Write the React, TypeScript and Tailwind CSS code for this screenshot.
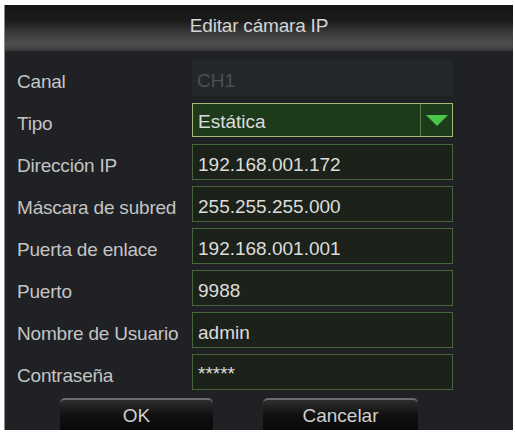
import { JSX } from "react";

type Field = { label: string; value: string };

const fields: Field[] = [
  { label: "Dirección IP", value: "192.168.001.172" },
  { label: "Máscara de subred", value: "255.255.255.000" },
  { label: "Puerta de enlace", value: "192.168.001.001" },
  { label: "Puerto", value: "9988" },
  { label: "Nombre de Usuario", value: "admin" },
  { label: "Contraseña", value: "*****" },
];

function Label({ children }: { children: string }): JSX.Element {
  return (
    <div className="w-[187px] shrink-0 pl-[12px] pt-[6px] whitespace-nowrap tracking-[-0.2px] text-[#c4c4c4]">
      {children}
    </div>
  );
}

export default function App(): JSX.Element {
  return (
    <div
      className="w-[515px] h-[434px] bg-white pt-[5px] pl-[4px]"
      style={{ fontFamily: '"Liberation Sans", Arial, sans-serif' }}
    >
      <div className="w-[509px] h-[425px] flex flex-col overflow-hidden bg-[#1f2124] border-l border-[#8a8a8a] text-[19px] leading-none">
        {/* title bar */}
        <div className="h-[46px] shrink-0 flex items-center justify-center pb-[6px] bg-[linear-gradient(to_bottom,#141414_0%,#1b1b1b_35%,#3c3c3c_62%,#4e4e4e_85%,#3a3a3a_100%)] text-[#d4d4d4] text-[19px] tracking-[-0.2px]">
          Editar cámara IP
        </div>

        <div className="flex flex-col gap-[6px] pt-[9px]">
          {/* Canal */}
          <div className="h-[36px] flex items-center">
            <Label>Canal</Label>
            <div className="w-[261px] h-[36px] flex items-center pl-[5px] pt-[4px] bg-[#24272a] text-[#4c4f52]">
              CH1
            </div>
          </div>

          {/* Tipo */}
          <div className="h-[36px] flex items-center">
            <Label>Tipo</Label>
            <div className="w-[261px] h-[34px] flex items-stretch border border-[#a6b676] bg-[#1d3a1b] text-[#dcdcdc]">
              <div className="flex-1 flex items-center pl-[5px] pt-[3px]">Estática</div>
              <div className="w-[32px] border-l border-[#5f7a4c] flex items-center justify-center">
                <svg width="22" height="11" viewBox="0 0 22 11">
                  <polygon points="0,0 22,0 11,11" fill="#4cc649" />
                </svg>
              </div>
            </div>
          </div>

          {fields.map((f) => (
            <div key={f.label} className="h-[36px] flex items-center">
              <Label>{f.label}</Label>
              <div
                className={`w-[261px] h-[36px] flex pl-[5px] border border-[#46653d] bg-[#1c2219] text-[#dcdcdc] ${
                  f.value === "*****" ? "items-start pt-[9px]" : "items-center pt-[5px]"
                }`}
              >
                {f.value}
              </div>
            </div>
          ))}
        </div>

        {/* buttons */}
        <div className="flex pt-[8px] pl-[55px] gap-[50px]">
          <button className="w-[153px] h-[36px] rounded-t-[5px] border-t-2 border-[#6a6a6a] bg-[linear-gradient(to_bottom,#2e2e2e_0%,#101010_45%,#060606_100%)] text-[#cfcfcf] text-[19px] pb-[4px]">
            OK
          </button>
          <button className="w-[155px] h-[36px] rounded-t-[5px] border-t-2 border-[#6a6a6a] bg-[linear-gradient(to_bottom,#2e2e2e_0%,#101010_45%,#060606_100%)] text-[#cfcfcf] text-[19px] pb-[4px]">
            Cancelar
          </button>
        </div>
      </div>
    </div>
  );
}
